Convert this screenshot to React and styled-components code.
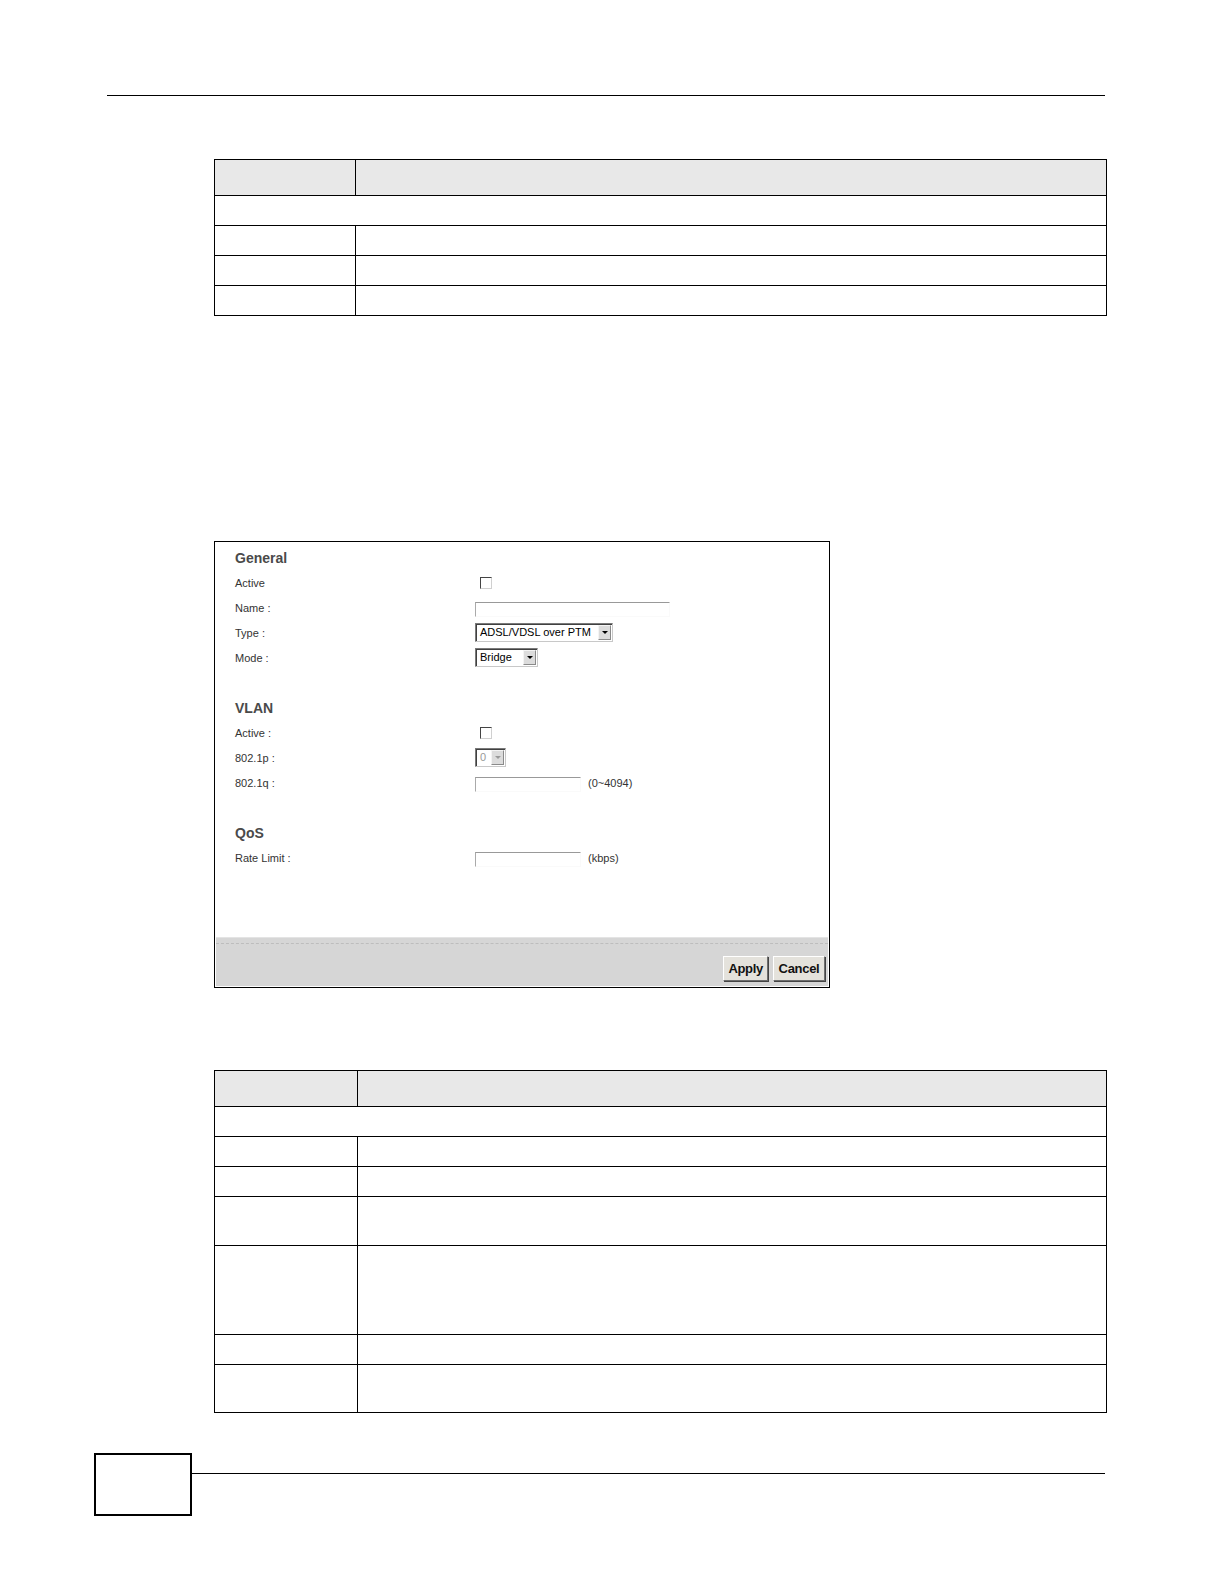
import React from "react";
import styled, { createGlobalStyle } from "styled-components";

const GlobalStyle = createGlobalStyle`
  html, body {
    margin: 0;
    padding: 0;
    background: #fff;
  }
  body {
    font-family: "Liberation Sans", Arial, sans-serif;
  }
`;

const Page = styled.div`
  width: 1224px;
  min-height: 1584px;
  background: #fff;
  padding-top: 95px;
  box-sizing: border-box;
`;

const HeaderRule = styled.div`
  margin-left: 107px;
  width: 998px;
  border-top: 1px solid #000;
`;

// Description tables (cells are empty in the reference)
const DocTable = styled.table`
  margin-top: ${(p) => p.$top}px;
  margin-left: 214px;
  width: ${(p) => p.$width}px;
  border-collapse: collapse;
  table-layout: fixed;

  td {
    border: 1px solid #000;
    padding: 0;
  }
`;

const HeadRow = styled.tr`
  td {
    background: #e8e8e8;
    height: 35px;
  }
`;

const BodyRow = styled.tr`
  td {
    height: ${(p) => p.$h}px;
  }
`;

// The screenshot panel
const Panel = styled.div`
  margin-top: 225px;
  margin-left: 214px;
  width: 616px;
  height: 447px;
  border: 1px solid #000;
  box-sizing: border-box;
  display: flex;
  flex-direction: column;
  font-family: "Liberation Sans", Arial, sans-serif;
`;

const PanelBody = styled.div`
  flex: 1;
  padding: 3px 0 0 20px;
`;

const FormGrid = styled.div`
  display: grid;
  grid-template-columns: 240px 1fr;
  grid-auto-rows: 25px;
  align-items: center;
`;

const SectionTitle = styled.div`
  grid-column: 1 / -1;
  font-size: 14px;
  font-weight: bold;
  color: #4a4a4a;
`;

const Spacer = styled.div`
  grid-column: 1 / -1;
`;

const Label = styled.div`
  font-size: 11px;
  color: #333;
`;

const Control = styled.div`
  display: flex;
  align-items: center;
  gap: 7px;
`;

const Hint = styled.span`
  font-size: 11px;
  color: #333;
`;

const CheckBox = styled.span`
  display: inline-block;
  width: 10px;
  height: 10px;
  margin-left: 5px;
  border-top: 1px solid #444;
  border-left: 1px solid #444;
  border-right: 1px solid #d0d0d0;
  border-bottom: 1px solid #d0d0d0;
  background: #fff;
`;

const TextField = styled.span`
  display: inline-block;
  width: ${(p) => p.$w}px;
  height: 15px;
  border-top: 1px solid #999;
  border-left: 1px solid #aaa;
  border-right: 1px solid #fafafa;
  border-bottom: 1px solid #fafafa;
  box-sizing: border-box;
  margin-top: 3px;
`;

const Select = styled.span`
  display: inline-flex;
  align-items: stretch;
  width: ${(p) => p.$w}px;
  height: 19px;
  box-sizing: border-box;
  border-top: 1px solid #7a7a7a;
  border-left: 1px solid #7a7a7a;
  border-right: 1px solid #c8c8c8;
  border-bottom: 1px solid #c8c8c8;
  box-shadow: inset 1px 1px 0 #404040;
  background: #fff;
`;

const SelectText = styled.span`
  flex: 1;
  font-size: 11px;
  line-height: 17px;
  padding-left: 4px;
  color: ${(p) => (p.$disabled ? "#999" : "#000")};
  white-space: nowrap;
  overflow: hidden;
`;

const SelectArrow = styled.span`
  width: 13px;
  margin: 1px 1px 1px 0;
  background: #dcdcdc;
  border-top: 1px solid #f4f4f4;
  border-left: 1px solid #f4f4f4;
  border-right: 1px solid #8a8a8a;
  border-bottom: 1px solid #8a8a8a;
  box-sizing: border-box;
  display: flex;
  align-items: center;
  justify-content: center;

  &::after {
    content: "";
    border-left: 3px solid transparent;
    border-right: 3px solid transparent;
    border-top: 3px solid ${(p) => (p.$disabled ? "#999" : "#000")};
  }
`;

const PanelFooter = styled.div`
  height: 48px;
  margin: 0 1px 1px 1px;
  background: #d6d6d6;
  border-top: 1px solid #e4e4e4;
  display: flex;
  flex-direction: column;
`;

const DottedRule = styled.div`
  margin-top: 5px;
  border-top: 1px dashed #bdbdbd;
`;

const ButtonRow = styled.div`
  flex: 1;
  display: flex;
  justify-content: flex-end;
  align-items: center;
  gap: 5px;
  padding: 6px 3px 0 0;
`;

const Button = styled.span`
  height: 25px;
  padding: 0 4px;
  min-width: ${(p) => p.$w}px;
  box-sizing: border-box;
  display: inline-flex;
  align-items: center;
  justify-content: center;
  background: #e4e2dc;
  border-top: 1px solid #fff;
  border-left: 1px solid #fff;
  border-right: 1px solid #6e6e6e;
  border-bottom: 1px solid #6e6e6e;
  box-shadow: 1px 1px 0 #444;
  font-size: 13px;
  font-weight: bold;
  color: #111;
  letter-spacing: -0.3px;
`;

// Page footer
const FooterRow = styled.div`
  margin-top: 40px;
  margin-left: 94px;
  width: 1011px;
  display: flex;
  align-items: flex-start;
`;

const PageNumberBox = styled.div`
  width: 98px;
  height: 63px;
  border: 2px solid #000;
  box-sizing: border-box;
`;

const FooterRule = styled.div`
  flex: 1;
  margin-top: 20px;
  border-top: 1px solid #000;
`;

const Sel = ({ w, children, disabled }) => (
  <Select $w={w}>
    <SelectText $disabled={disabled}>{children}</SelectText>
    <SelectArrow $disabled={disabled} />
  </Select>
);

const table1Rows = [29, 29, 29, 29];
const table2Rows = [29, 29, 29, 48, 88, 29, 47];

export default function App() {
  return (
    <Page>
      <GlobalStyle />
      <HeaderRule />

      <DocTable $top={63} $width={893}>
        <colgroup>
          <col style={{ width: 141 }} />
          <col />
        </colgroup>
        <tbody>
          <HeadRow>
            <td />
            <td />
          </HeadRow>
          {table1Rows.map((h, i) =>
            i === 0 ? (
              <BodyRow key={i} $h={h}>
                <td colSpan={2} />
              </BodyRow>
            ) : (
              <BodyRow key={i} $h={h}>
                <td />
                <td />
              </BodyRow>
            )
          )}
        </tbody>
      </DocTable>

      <Panel>
        <PanelBody>
          <FormGrid>
            <SectionTitle>General</SectionTitle>
            <Label>Active</Label>
            <Control>
              <CheckBox />
            </Control>
            <Label>Name :</Label>
            <Control>
              <TextField $w={195} />
            </Control>
            <Label>Type :</Label>
            <Control>
              <Sel w={138}>ADSL/VDSL over PTM</Sel>
            </Control>
            <Label>Mode :</Label>
            <Control>
              <Sel w={63}>Bridge</Sel>
            </Control>
            <Spacer />

            <SectionTitle>VLAN</SectionTitle>
            <Label>Active :</Label>
            <Control>
              <CheckBox />
            </Control>
            <Label>802.1p :</Label>
            <Control>
              <Sel w={31} disabled>
                0
              </Sel>
            </Control>
            <Label>802.1q :</Label>
            <Control>
              <TextField $w={106} />
              <Hint>(0~4094)</Hint>
            </Control>
            <Spacer />

            <SectionTitle>QoS</SectionTitle>
            <Label>Rate Limit :</Label>
            <Control>
              <TextField $w={106} />
              <Hint>(kbps)</Hint>
            </Control>
          </FormGrid>
        </PanelBody>
        <PanelFooter>
          <DottedRule />
          <ButtonRow>
            <Button $w={42}>Apply</Button>
            <Button $w={52}>Cancel</Button>
          </ButtonRow>
        </PanelFooter>
      </Panel>

      <DocTable $top={82} $width={893}>
        <colgroup>
          <col style={{ width: 143 }} />
          <col />
        </colgroup>
        <tbody>
          <HeadRow>
            <td />
            <td />
          </HeadRow>
          {table2Rows.map((h, i) =>
            i === 0 ? (
              <BodyRow key={i} $h={h}>
                <td colSpan={2} />
              </BodyRow>
            ) : (
              <BodyRow key={i} $h={h}>
                <td />
                <td />
              </BodyRow>
            )
          )}
        </tbody>
      </DocTable>

      <FooterRow>
        <PageNumberBox />
        <FooterRule />
      </FooterRow>
    </Page>
  );
}
